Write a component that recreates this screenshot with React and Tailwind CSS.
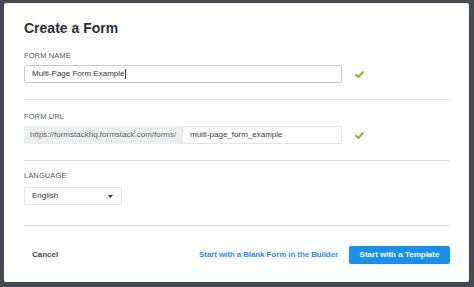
import React from 'react';

function Check() {
  return (
    <svg width="9" height="7" viewBox="0 0 9 7" className="ml-[13px]">
      <path d="M1 3.6 L3.4 6 L8 1.2" fill="none" stroke="#78b72c" strokeWidth="1.9" strokeLinecap="round" strokeLinejoin="round" />
    </svg>
  );
}

function Label({ children, className = '' }) {
  return (
    <div className={`text-[7.5px] leading-[10px] text-[#555a60] tracking-[0.1px] ${className}`}>
      {children}
    </div>
  );
}

export default function App() {
  return (
    <div
      className="w-[474px] h-[287px] bg-[#464a50] pt-[3px] pl-[4px] pr-[5px] pb-[5px] flex"
      style={{ fontFamily: '"Liberation Sans", Arial, sans-serif' }}
    >
      <div className="flex-1 bg-white rounded-[2px] pl-[20px] pr-[19px] flex flex-col">
        <h1 className="mt-[17px] text-[14px] leading-[16px] font-bold text-[#2c2f33]">Create a Form</h1>

        {/* form name */}
        <Label className="mt-[15px]">FORM NAME</Label>
        <div className="mt-[4px] flex items-center">
          <div className="w-[318px] h-[18px] border border-[#c9cacc] rounded-[2px] flex items-center px-[7px] text-[8px] text-[#33363a]">
            Multi-Page Form Example<span className="w-px h-[10px] bg-[#33363a] ml-px" />
          </div>
          <Check />
        </div>
        <div className="mt-[16px] h-px bg-[#dfe1e3]" />

        {/* form url */}
        <Label className="mt-[12px]">FORM URL</Label>
        <div className="mt-[4px] flex items-center">
          <div className="w-[158px] h-[18px] bg-[#eceef0] rounded-l-[2px] flex items-center pl-[6px] text-[8px] text-[#5f6369]">
            https://formstackhq.formstack.com/forms/
          </div>
          <div className="w-[160px] h-[18px] border border-[#e3e5e7] rounded-r-[2px] flex items-center px-[7px] text-[8px] text-[#3a3d41]">
            multi-page_form_example
          </div>
          <Check />
        </div>
        <div className="mt-[16px] h-px bg-[#dfe1e3]" />

        {/* language */}
        <Label className="mt-[10px]">LANGUAGE</Label>
        <div className="mt-[6px] w-[98px] h-[18px] border border-[#e3e5e7] rounded-[2px] flex items-center justify-between pl-[7px] pr-[8px] text-[8px] text-[#33363a]">
          <span>English</span>
          <svg width="5" height="3" viewBox="0 0 5 3">
            <path d="M0 0 H5 L2.5 3 Z" fill="#3a3d41" />
          </svg>
        </div>
        <div className="mt-[20px] h-px bg-[#dfe1e3]" />

        {/* footer */}
        <div className="mt-[20px] flex items-center h-[18px]">
          <button className="pl-[8px] text-[8px] font-bold text-[#4a4e54]">Cancel</button>
          <div className="ml-auto flex items-center gap-[11px]">
            <button className="text-[8px] font-bold text-[#1f8fe0] tracking-[-0.1px]">Start with a Blank Form in the Builder</button>
            <button className="w-[101px] h-[18px] bg-[#1a90ea] rounded-[2px] text-white text-[8px] font-bold">
              Start with a Template
            </button>
          </div>
        </div>
      </div>
    </div>
  );
}
